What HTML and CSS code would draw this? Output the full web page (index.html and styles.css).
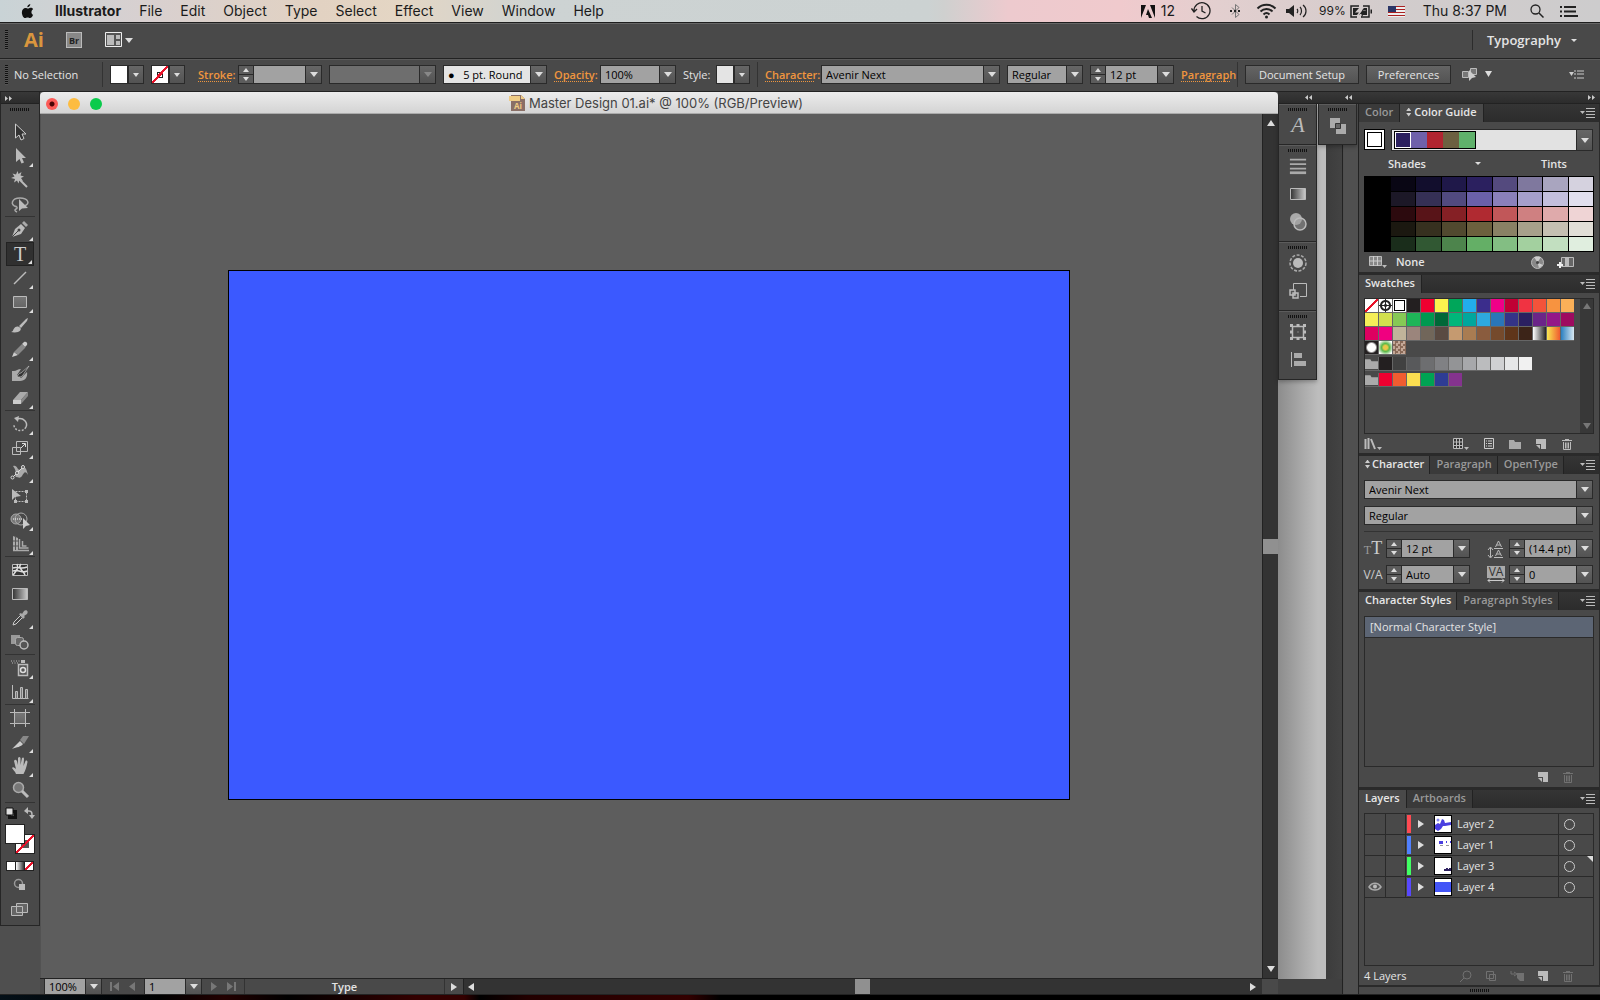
FILE: index.html
```html
<!DOCTYPE html>
<html lang="en">
<head>
    <meta charset="UTF-8">
    <meta name="viewport" content="width=device-width, initial-scale=1.0">
    <title>Master Design 01.ai</title>
    <link rel="stylesheet" href="styles.css">
</head>
<body>
    <svg class="defs" aria-hidden="true">
        <defs>
            <linearGradient id="fade"><stop offset="0" stop-color="#333"/><stop offset="1" stop-color="#ccc"/></linearGradient>
            <linearGradient id="metal" x2="0" y2="1"><stop offset="0" stop-color="#777"/><stop offset="1" stop-color="#666"/></linearGradient>
        </defs>
        <symbol id="select" viewBox="0 0 20 20"><path d="M5.500 2v14l3.500-3 2 5 3-1.500-2-4.500h4z" fill="#333" stroke="#ccc"/></symbol>
        <symbol id="direct" viewBox="0 0 20 20"><path d="M6 2v14l3.500-3 2 4.500 2.500-1-2-4.500h4z" fill="#bbb"/></symbol>
        <symbol id="wand" viewBox="0 0 20 20"><path d="M7.500 1l1 3 3-2-1 3.500 3.500 1-3 1.500 2 3-3.500-1-1 3.500-1.500-3-3 2 1-3.500-4-1 3.500-1.500-2-3 3.500 1z" fill="#bbb"/><path d="M9 9l8 8" stroke="#bbb" stroke-width="2"/></symbol>
        <symbol id="lasso" viewBox="0 0 20 20"><path d="M7 13C-1 11 2 4 10 4s11 6 4 8M4 12c3 0 4 2 2 3s-1 2 1 3" fill="none" stroke="#aaa" stroke-width="1.500"/><path d="M9 5v12l3-2.500 6-.5z" fill="#bbb"/></symbol>
        <symbol id="pen" viewBox="0 0 20 20"><path d="M2 17l3-8 6-5 4 4-4 6z" fill="#bbb"/><path d="M12 3l2-2 4 4-2 2z" fill="#aaa"/><path d="M2 17l7-7" stroke="#444"/><circle cx="9" cy="10" r="1.500" fill="#444"/></symbol>
        <symbol id="line" viewBox="0 0 20 20"><path d="M4 16L16 4" stroke="#bbb" stroke-width="1.500"/></symbol>
        <symbol id="rect" viewBox="0 0 20 20"><path d="M3.500 4.500h13v11h-13z" fill="url(#metal)" stroke="#bbb"/></symbol>
        <symbol id="brush" viewBox="0 0 20 20"><path d="M18 2l-1 3-6 7-2-2 7-7zM9 11c3 1 2 4-1 5-2 .7-5 .6-7 0 2-.500 2-2 3-3.500C5 11 7 10 9 11z" fill="#bbb"/></symbol>
        <symbol id="pencil" viewBox="0 0 20 20"><path d="M2 17l2-5 4 3zM12 4l2-2c2-1 4 1 3 3l-2 2z" fill="#ccc"/><path d="M4 12l8-8 3.500 3.500L8 15z" fill="#888"/></symbol>
        <symbol id="blob" viewBox="0 0 20 20"><path d="M2 7h2c2 0 4-2 7-2l-4 6 4 3 6-6c1 5-2 9-7 9H2z" fill="#aaa"/><path d="M19 2l-8 7c-2 0-3 2-4 4 3 0 5 0 6-2z" fill="#333" stroke="#bbb" stroke-width=".700"/></symbol>
        <symbol id="eraser" viewBox="0 0 20 20"><path d="M3 12l7-8h8l-7 8z" fill="#aaa"/><path d="M3 12h8v4H3z" fill="#ccc"/><path d="M11 12l7-8v4l-7 8z" fill="#888"/></symbol>
        <symbol id="rotate" viewBox="0 0 20 20"><path d="M7 5c7-2 11 4 9 8" fill="none" stroke="#bbb" stroke-width="1.500"/><path d="M16 13c-3 6-12 4-12-2" fill="none" stroke="#bbb" stroke-width="1.500" stroke-dasharray="2 1.500"/><path d="M4 4l5-2-1 6z" fill="#bbb"/></symbol>
        <symbol id="scale" viewBox="0 0 20 20"><path d="M2.500 9.500h8v7h-8zM6.500 3.500h11v10h-11z" fill="none" stroke="#bbb"/><path d="M11 10l4-4M12 5.500h3.500V9" stroke="#ddd" fill="none"/></symbol>
        <symbol id="warp" viewBox="0 0 20 20"><path d="M3 4c5-2 4 6 8 3s5-2 7 6c-3-5-4-2-6 1s-4 1-6 1c-2-1 2-5-3-11z" fill="#aaa"/><path d="M2 16L13 5" stroke="#ddd"/><circle cx="2.500" cy="15.500" r="1.500" fill="#444" stroke="#ddd"/><circle cx="7" cy="11" r="1.500" fill="#444" stroke="#ddd"/><circle cx="13" cy="5" r="1.500" fill="#444" stroke="#ddd"/></symbol>
        <symbol id="free" viewBox="0 0 20 20"><path d="M5.500 5.500h11v10h-11z" fill="none" stroke="#bbb" stroke-dasharray="2 1"/><path d="M15 4h3v3h-3zM15 14h3v3h-3zM4 14h3v3H4zM2 3v11l3-3 6-1z" fill="#bbb"/></symbol>
        <symbol id="builder" viewBox="0 0 20 20"><circle cx="6" cy="9" r="5" fill="#777" stroke="#aaa"/><circle cx="11" cy="9" r="6" fill="none" stroke="#aaa"/><path d="M3 9h10" stroke="#fff" stroke-dasharray="1 1"/><path d="M13 8v11l3-3 4-1z" fill="#ccc"/></symbol>
        <symbol id="persp" viewBox="0 0 20 20"><path d="M3 2l5 2v13H3z" fill="#aaa"/><path d="M9.500 5v9h9M12.500 7v5h4M3 16.500h16" stroke="#aaa" stroke-width="1.500" fill="none"/><path d="M3 7h6M3 12h6M5.500 2v14" stroke="#555"/></symbol>
        <symbol id="mesh" viewBox="0 0 20 20"><path d="M2.500 4.500h15v11h-15z" fill="#333" stroke="#bbb"/><path d="M7 4c2 5-1 7-4 11M11 4c-4 4 3 7 4 11M3 8c4-2 8 2 14-1M3 11c6-2 9 3 14 0" fill="none" stroke="#ddd" stroke-width="1.500"/></symbol>
        <symbol id="grad" viewBox="0 0 20 20"><path d="M2.500 4.500h15v11h-15z" fill="url(#fade)" stroke="#bbb"/></symbol>
        <symbol id="dropper" viewBox="0 0 20 20"><path d="M3 17l1-3 7-7 2 2-7 7z" fill="#444" stroke="#ccc"/><path d="M9 6l2-1 1 1 2-3c2-2 5 0 3 3l-3 2 1 1-2 2z" fill="#aaa"/></symbol>
        <symbol id="blend" viewBox="0 0 20 20"><path d="M1 3h9v9H1z" fill="#999"/><rect x="5.500" y="5.500" width="8" height="8" rx="2" fill="#666" stroke="#aaa"/><circle cx="14" cy="13" r="4" fill="#555" stroke="#bbb" stroke-width="1.500"/></symbol>
        <symbol id="spray" viewBox="0 0 20 20"><path d="M1 3h9M2 5h7" stroke="#bbb" stroke-dasharray="1 1.500"/><path d="M11 2h4v3h-4z" fill="#bbb"/><path d="M8.500 6.500h9v11h-9z" fill="#555" stroke="#bbb" stroke-width="1.500"/><circle cx="13" cy="12" r="2.500" fill="none" stroke="#ddd" stroke-width="1.500"/></symbol>
        <symbol id="graph" viewBox="0 0 20 20"><path d="M2.500 3v13.500h16" fill="none" stroke="#bbb"/><path d="M5.500 9.500h2v7h-2zM10.500 5.500h2v11h-2zM15.500 7.500h2v9h-2z" fill="#777" stroke="#bbb"/></symbol>
        <symbol id="artboard" viewBox="0 0 20 20"><path d="M4.500 1v18M15.500 1v18M0 4.500h20M0 15.500h20" stroke="#bbb"/><path d="M4.500 4.500h11v11h-11z" fill="url(#metal)" stroke="#bbb"/></symbol>
        <symbol id="slice" viewBox="0 0 20 20"><path d="M2 17l8-8 3 3c-2 3-6 3-11 5z" fill="#ccc"/><path d="M10 8l3-4h6l-5 8z" fill="#888"/></symbol>
        <symbol id="hand" viewBox="0 0 20 20"><path d="M6 18c-1-3-3-4-4-6 1-2 3 0 4 1L4 5c1-2 2-1 3 0l1 4V2c1-1.500 2-1 2.500 0v7l1.500-7c1-1 2-.5 2 1l-.5 7 2-5c1-1 2 0 2 1-1 5-2 8-4 12z" fill="#bbb"/></symbol>
        <symbol id="zoom" viewBox="0 0 20 20"><circle cx="8.500" cy="7.500" r="5" fill="#777" stroke="#aaa" stroke-width="1.500"/><path d="M12 11l6 6" stroke="#bbb" stroke-width="3"/></symbol>
        <symbol id="modes" viewBox="0 0 20 20"><circle cx="8.500" cy="8.500" r="4" fill="none" stroke="#999" stroke-width="1.500"/><path d="M9 9h6v6H9z" fill="#bbb"/></symbol>
        <symbol id="screens" viewBox="0 0 20 20"><path d="M1.500 7.500h11v9h-11zM6.500 4.500h11v9h-11z" fill="#666" stroke="#bbb"/></symbol>
        <symbol id="lines" viewBox="0 0 20 20"><path d="M1 3h18M1 8h18M1 13h18" stroke="#aaa" stroke-width="2"/><path d="M1 17.500h18" stroke="#aaa" stroke-width="3"/></symbol>
        <symbol id="transp" viewBox="0 0 20 20"><circle cx="8" cy="7" r="6" fill="#aaa"/><circle cx="12" cy="12" r="6" fill="#999" fill-opacity=".500" stroke="#bbb" stroke-width="1.500"/></symbol>
        <symbol id="appear" viewBox="0 0 20 20"><circle cx="10" cy="10" r="5" fill="#bbb"/><circle cx="10" cy="10" r="8" fill="none" stroke="#aaa" stroke-width="1.500" stroke-dasharray="3 1.500"/></symbol>
        <symbol id="gstyle" viewBox="0 0 20 20"><path d="M5.500 10V2.500h13v13H12" fill="none" stroke="#bbb"/><path d="M2 9h5v5H2zM5 12h5v5H5z" fill="#555" stroke="#bbb" stroke-width="1.500"/></symbol>
        <symbol id="trans" viewBox="0 0 20 20"><path d="M4.500 4.500h11v11h-11z" fill="none" stroke="#bbb" stroke-width="1.500"/><path d="M2 2h3v3H2zM8.500 2h3v3h-3zM15 2h3v3h-3zM2 8.500h3v3H2zM15 8.500h3v3h-3zM2 15h3v3H2zM8.500 15h3v3h-3zM15 15h3v3h-3zM9.500 9.500h1v1h-1z" fill="#bbb"/></symbol>
        <symbol id="align" viewBox="0 0 20 20"><path d="M3.500 2v15" stroke="#bbb"/><path d="M6 3h8v5H6zM6 11h12v5H6z" fill="#aaa"/></symbol>
        <symbol id="pathf" viewBox="0 0 20 20"><path d="M2 3h10v10H2zM8 9h10v10H8z" fill="#aaa"/><path d="M7.500 8.500h5v5h-5z" fill="#666" stroke="#333"/></symbol>
        <symbol id="menu" viewBox="0 0 16 10"><path d="M0 3h5L2.500 6z" fill="#bbb"/><path d="M6 .500h9M6 3.500h9M6 6.500h9M6 9.500h9" stroke="#bbb"/></symbol>
        <symbol id="new" viewBox="0 0 12 12"><path d="M1 1h10v10H6V6H1z" fill="#bbb"/><path d="M1 7h4v4z" fill="#bbb"/></symbol>
        <symbol id="trash" viewBox="0 0 12 12"><path d="M1 2.500h10M4 1.500h4M2.500 4v7.500h7V4M4.500 4.500v6M6 4.500v6M7.500 4.500v6" fill="none" stroke="#bbb"/></symbol>
        <symbol id="folder" viewBox="0 0 12 12"><path d="M0 2h5l1 2h6v7H0z" fill="#aaa"/></symbol>
        <symbol id="gridv" viewBox="0 0 18 12"><path d="M.500.500h12v9H.500z" fill="#888" stroke="#bbb"/><path d="M4.500 0v10M8.500 0v10M0 5h13" stroke="#ccc"/><path d="M13 9h5l-2.500 3z" fill="#bbb"/></symbol>
    </svg>

    <header class="menubar">
        <svg class="apple" viewBox="0 0 16 18"><path d="M11 1c0 2-1.500 3.500-3.200 3.500C7.600 3 9 1.300 11 1zM14 12.500C13 15 12 16 10.700 16c-1 0-1.400-.6-2.600-.6s-1.700.6-2.600.6C3.500 16 2 12.500 2 10c0-3 2-4.800 3.800-4.800 1.200 0 1.900.7 2.700.7.700 0 1.600-.8 3-.8 1 0 2 .5 2.500 1.400-2.500 1.500-2.300 5 0 6z" fill="#111"/></svg>
        <nav class="menus">
            <a href="#" class="app-name">Illustrator</a>
            <a href="#">File</a>
            <a href="#">Edit</a>
            <a href="#">Object</a>
            <a href="#">Type</a>
            <a href="#">Select</a>
            <a href="#">Effect</a>
            <a href="#">View</a>
            <a href="#">Window</a>
            <a href="#">Help</a>
        </nav>
        <div class="status-items">
            <svg width="14" height="13" viewBox="0 0 14 13"><path d="M0 0h5L0 13zM9 0h5v13zM7 4l4 9H8L7 10H5z" fill="#111"/></svg>
            <span class="count">12</span>
            <svg class="s-clock" width="20" height="18" viewBox="0 0 20 18"><path d="M3 9a8 8 0 1 1 2.500 5.500M.500 6.500L3 10l3-3M11 4v5l3.500 2" fill="none" stroke="#222" stroke-width="1.300"/></svg>
            <svg class="s-bt" width="12" height="16" viewBox="0 0 12 16"><path d="M2 4.500l7 7-3.500 3v-13L9 4.500l-7 7" fill="none" stroke="#777"/><path d="M0 8h12" stroke="#222" stroke-width="2" stroke-dasharray="2 2"/></svg>
            <svg class="s-wifi" width="21" height="16" viewBox="0 0 21 16"><path d="M1.500 5.500c5-5 13-5 18 0M4.500 8.500c3.500-3.500 8.500-3.500 12 0M7.500 11.500c2-2 4-2 6 0" fill="none" stroke="#222" stroke-width="2"/><circle cx="10.500" cy="14" r="1.500" fill="#222"/></svg>
            <svg class="s-vol" width="22" height="14" viewBox="0 0 22 14"><path d="M0 5h3l5-4v12L3 9H0z" fill="#222"/><path d="M11 5c1 1 1 3 0 4M14 3c2 2 2 6 0 8M17 1c4 3 4 9 0 12" fill="none" stroke="#222" stroke-width="1.200"/></svg>
            <span class="charge">99%</span>
            <svg width="23" height="13" viewBox="0 0 23 13"><path d="M9 1H1v11h6M13 1h6v11h-8" fill="none" stroke="#222" stroke-width="1.500"/><path d="M3 3h6l-4 4.500h4L7 10H3zM17 10h-6l5-4.500h-4L14 3h3z" fill="#222"/><path d="M9 10l5-7-1 3h3l-5 7 1-4H9z" fill="#222"/><path d="M20.500 4.500h1.500v4h-1.500z" fill="#222"/></svg>
            <svg class="s-flag" width="17" height="11" viewBox="0 0 17 11"><path d="M0 0h17v11H0z" fill="#eee"/><path d="M0 .500h17M0 3.500h17M0 6.500h17M0 9.500h17" stroke="#a22"/><path d="M0 0h8v6H0z" fill="#2a3566"/></svg>
            <span class="time">Thu 8:37 PM</span>
            <svg class="s-find" width="14" height="14" viewBox="0 0 14 14"><circle cx="5.500" cy="5.500" r="4.500" fill="none" stroke="#222" stroke-width="1.300"/><path d="M9 9l4.500 4.500" stroke="#222" stroke-width="1.500"/></svg>
            <svg class="s-list" width="18" height="11" viewBox="0 0 18 11"><path d="M0 1h2M0 5.500h2M0 10h2M4 1h12M4 5.500h12M4 10h14" stroke="#222" stroke-width="2"/></svg>
        </div>
    </header>

    <div class="appbar">
        <i class="grip-v"></i>
        <span class="logo">Ai</span>
        <button class="bridge">Br</button>
        <button class="arrange" aria-label="Arrange documents"><svg width="28" height="16" viewBox="0 0 28 16"><path d="M.500.500h16v14H.500z" fill="#555" stroke="#eee"/><path d="M2 3h7v10H2zM11 3h4v4h-4zM11 9h4v4h-4z" fill="#bbb"/><path d="M20 6h8l-4 5z" fill="#ddd"/></svg></button>
        <button class="workspace">Typography<i class="tri small"></i></button>
    </div>

    <div class="control">
        <i class="grip-v"></i>
        <span class="state">No Selection</span>
        <i class="rule"></i>
        <button class="chip" aria-label="Fill"><i class="paint"></i><i class="drop"></i></button>
        <button class="chip" aria-label="Stroke"><i class="paint none"></i><i class="drop"></i></button>
        <a href="#" class="l-stroke">Stroke:</a>
        <span class="combo num"><i class="step"></i><input type="text" aria-label="Stroke weight"><i class="drop"></i></span>
        <span class="combo profile"><select aria-label="Width profile" disabled><option></option></select><i class="drop"></i></span>
        <span class="combo brushes"><select aria-label="Brush"><option>●&nbsp;&nbsp; 5 pt. Round</option></select><i class="drop"></i></span>
        <a href="#" class="l-opacity">Opacity:</a>
        <span class="combo w76"><input type="text" value="100%" aria-label="Opacity"><i class="drop"></i></span>
        <span class="l-style">Style:</span>
        <button class="chip" aria-label="Style"><i class="paint pale"></i><i class="drop"></i></button>
        <i class="rule"></i>
        <a href="#" class="l-char">Character:</a>
        <span class="combo font"><select aria-label="Font"><option>Avenir Next</option></select><i class="drop"></i></span>
        <span class="combo w76"><select aria-label="Font style"><option>Regular</option></select><i class="drop"></i></span>
        <span class="combo num"><i class="step"></i><input type="text" value="12 pt" aria-label="Font size"><i class="drop"></i></span>
        <a href="#" class="l-char">Paragraph</a>
        <i class="rule"></i>
        <button class="btn setup">Document Setup</button>
        <button class="btn prefs">Preferences</button>
        <button class="similar" aria-label="Select similar"><svg width="32" height="15" viewBox="0 0 32 15"><path d="M1.500 4.500h6v6h-6zM9.500 1.500h6v6h-6z" fill="#777" stroke="#bbb"/><path d="M8 3v11l3-3 4-1z" fill="#ccc"/><path d="M24 4h7l-3.500 6z" fill="#ddd"/></svg></button>
        <button class="bar-menu" aria-label="Panel menu"><svg width="15" height="9" viewBox="0 0 15 9"><path d="M0 2h5L2.500 6z" fill="#ccc"/><path d="M5 1h2M8 1h7M5 4h2M8 4h7M5 8h2M8 8h7" stroke="#ccc"/></svg></button>
    </div>

    <main class="work">
        <aside class="tools">
            <div class="strip"><svg width="7" height="5" viewBox="0 0 7 5"><path d="M0 0l3 2.500L0 5zM4 0l3 2.500L4 5z" fill="#ccc"/></svg></div>
            <i class="grip"></i>
            <div id="toolbox"></div>
            <div class="fill-top">
                <svg width="12" height="12" viewBox="0 0 12 12"><path d="M4.500 4.500h6v6h-6z" fill="none" stroke="#111" stroke-width="3"/><path d="M1 1h7v7H1z" fill="#ddd" stroke="#111"/></svg>
                <svg width="11" height="12" viewBox="0 0 11 12"><path d="M2 4h3c3 0 3 2 3 5" fill="none" stroke="#bbb" stroke-width="1.500"/><path d="M0 4l4-4v7zM5 8h6l-3 4z" fill="#bbb"/></svg>
            </div>
            <div class="fill-stroke"><i class="f-stroke"></i><i class="f-fill"></i></div>
            <div class="fill-kind"><i></i><i class="g"></i><i class="n"></i></div>
            <button class="tool" aria-label="Drawing mode"><svg><use href="#modes"/></svg></button>
            <button class="tool" aria-label="Screen mode"><svg><use href="#screens"/></svg></button>
        </aside>

        <section class="document">
            <div class="titlebar">
                <div class="lights"><i class="close"></i><i class="mini"></i><i class="full"></i></div>
                <svg width="16" height="16" viewBox="0 0 16 16"><path d="M2 0h10l4 4v12H2z" fill="#8a6f66"/><path d="M0 1h11v5H0z" fill="#efcc85"/><path d="M12 0l4 4h-4z" fill="#efcc85"/><text x="5" y="14" class="doc-ai">Ai</text></svg>
                <h1>Master Design 01.ai* @ 100% (RGB/Preview)</h1>
            </div>
            <div class="view">
                <div class="canvas"><div class="artboard"></div></div>
                <div class="vscroll"><i class="up"></i><i class="thumb"></i><i class="down"></i></div>
            </div>
            <div class="statusbar">
                <span class="combo zoomf"><input type="text" value="100%" aria-label="Zoom"><i class="drop"></i></span>
                <svg class="pager" width="26" height="9" viewBox="0 0 26 9"><path d="M0 0h2v9H0zM9 0v9L3 4.500zM25 0v9l-6-4.500z" fill="#777"/></svg>
                <span class="combo zoomf"><input type="text" value="1" aria-label="Artboard"><i class="drop"></i></span>
                <svg class="pager" width="26" height="9" viewBox="0 0 26 9"><path d="M1 0v9l6-4.500zM17 0v9l6-4.500zM24 0h2v9h-2z" fill="#777"/></svg>
                <span class="mode">Type</span>
                <button class="mode-next" aria-label="Status menu"><i class="right"></i></button>
                <div class="hscroll"><i class="left"></i><i class="thumb"></i><i class="right"></i></div>
                <i class="corner"></i>
            </div>
        </section>

        <section class="docks">
            <div class="strip">
                <svg class="c1" width="7" height="5" viewBox="0 0 7 5"><path d="M3 0L0 2.500 3 5zM7 0L4 2.500 7 5z" fill="#ccc"/></svg>
                <svg class="c2" width="7" height="5" viewBox="0 0 7 5"><path d="M3 0L0 2.500 3 5zM7 0L4 2.500 7 5z" fill="#ccc"/></svg>
                <svg class="c3" width="7" height="5" viewBox="0 0 7 5"><path d="M0 0l3 2.500L0 5zM4 0l3 2.500L4 5z" fill="#ccc"/></svg>
            </div>
            <div class="dock-row">
                <div class="icon-docks">
                    <div class="dock">
                        <div class="set"><i class="grip"></i><button class="glyph" aria-label="Character styles">A</button></div>
                        <div class="set"><i class="grip"></i>
                            <button aria-label="Stroke"><svg class="flat"><use href="#lines"/></svg></button>
                            <button aria-label="Gradient"><svg><use href="#grad"/></svg></button>
                            <button aria-label="Transparency"><svg><use href="#transp"/></svg></button>
                        </div>
                        <div class="set"><i class="grip"></i>
                            <button aria-label="Appearance"><svg><use href="#appear"/></svg></button>
                            <button aria-label="Graphic styles"><svg><use href="#gstyle"/></svg></button>
                        </div>
                        <div class="set"><i class="grip"></i>
                            <button aria-label="Transform"><svg><use href="#trans"/></svg></button>
                            <button aria-label="Align"><svg><use href="#align"/></svg></button>
                        </div>
                    </div>
                    <div class="dock">
                        <div class="set"><i class="grip"></i><button aria-label="Pathfinder"><svg><use href="#pathf"/></svg></button></div>
                    </div>
                </div>

                <div class="panels">
                    <div class="panel">
                        <div class="tabs"><button>Color</button><button class="on"><i class="updown"></i>Color Guide</button><svg><use href="#menu"/></svg></div>
                        <div class="guide-top">
                            <i class="base"></i>
                            <div class="harmony"><div id="harmony"></div><i class="drop"></i></div>
                        </div>
                        <div class="guide-names"><span>Shades</span><i class="tri small"></i><span>Tints</span></div>
                        <div class="guide" id="guide"></div>
                        <div class="foot guide-foot">
                            <svg width="18" height="12"><use href="#gridv"/></svg><span class="none-label">None</span>
                            <svg class="push" width="13" height="13" viewBox="0 0 13 13"><circle cx="6.500" cy="6.500" r="6" fill="#888" stroke="#bbb"/><path d="M6.500 6.500L3 1h7zM6.500 6.500L12 9l-4 3z" fill="#ccc"/><circle cx="6.500" cy="6.500" r="1.500" fill="#444"/></svg>
                            <svg width="17" height="13" viewBox="0 0 17 13"><path d="M4.500 1.500h12v9h-12z" fill="#666" stroke="#bbb"/><path d="M8 2h4v8H8z" fill="#bbb"/><path d="M0 9h6M3 6v6" stroke="#eee" stroke-width="2"/></svg>
                            <i class="resize"></i>
                        </div>
                    </div>

                    <div class="panel">
                        <div class="tabs"><button class="on">Swatches</button><svg><use href="#menu"/></svg></div>
                        <div class="swatch-box">
                            <div id="swatches"></div>
                            <div class="mini-scroll"><i class="up"></i><i class="down"></i></div>
                        </div>
                        <div class="foot swatch-foot">
                            <svg width="18" height="12" viewBox="0 0 18 12"><path d="M1.500 1v10M4.500 0v11M7 1l4 10" stroke="#bbb" stroke-width="2"/><path d="M13 9h5l-2.500 3z" fill="#bbb"/></svg>
                            <svg class="push" width="16" height="12" viewBox="0 0 16 12"><path d="M.500.500h9v10h-9z" fill="#333" stroke="#bbb"/><path d="M3.500 0v11M6.500 0v11M0 4h10M0 7.500h10" stroke="#bbb"/><path d="M11 9h5l-2.500 3z" fill="#bbb"/></svg>
                            <svg width="12" height="12" viewBox="0 0 12 12"><path d="M1.500.500h9v10h-9z" fill="none" stroke="#ccc"/><path d="M3 3h1M5 3h4M3 5.500h1M5 5.500h4M3 8h1M5 8h4" stroke="#ccc"/></svg>
                            <svg width="12" height="12"><use href="#folder"/></svg>
                            <svg width="12" height="12"><use href="#new"/></svg>
                            <svg width="12" height="12"><use href="#trash"/></svg>
                            <i class="resize"></i>
                        </div>
                    </div>

                    <div class="panel">
                        <div class="tabs tight"><button class="on"><i class="updown"></i>Character</button><button>Paragraph</button><button>OpenType</button><svg><use href="#menu"/></svg></div>
                        <div class="char">
                            <span class="combo wide"><select aria-label="Font family"><option>Avenir Next</option></select><i class="drop"></i></span>
                            <span class="combo wide"><select aria-label="Style"><option>Regular</option></select><i class="drop"></i></span>
                            <hr>
                            <label class="serif" for="size"><small>T</small>T</label>
                            <span class="combo num"><i class="step"></i><input type="text" id="size" value="12 pt"><i class="drop"></i></span>
                            <label for="leading"><svg width="18" height="18" viewBox="0 0 18 18"><path d="M3.500 8v9M1 10l2.500-3L6 10M1 15l2.500 3L6 15M7 8.500h9M7 17.500h9M8.500 7l3-6 3 6M9.500 5h4M8.500 16l3-6 3 6M9.500 14h4" fill="none" stroke="#bbb"/></svg></label>
                            <span class="combo num"><i class="step"></i><input type="text" id="leading" value="(14.4 pt)"><i class="drop"></i></span>
                            <label class="kern" for="kern">V/A</label>
                            <span class="combo num"><i class="step"></i><input type="text" id="kern" value="Auto"><i class="drop"></i></span>
                            <label class="track" for="track"><span>VA</span><svg width="18" height="5" viewBox="0 0 18 5"><path d="M1 2.500h16M3 .500L1 2.500l2 2M15 .500l2 2-2 2" fill="none" stroke="#ccc"/></svg></label>
                            <span class="combo num"><i class="step"></i><input type="text" id="track" value="0"><i class="drop"></i></span>
                        </div>
                    </div>

                    <div class="panel grow">
                        <div class="tabs tight"><button class="on">Character Styles</button><button>Paragraph Styles</button><svg><use href="#menu"/></svg></div>
                        <ul class="styles"><li>[Normal Character Style]</li></ul>
                        <div class="foot">
                            <svg class="push" width="12" height="12"><use href="#new"/></svg>
                            <svg class="dim" width="12" height="12"><use href="#trash"/></svg>
                            <i class="resize"></i>
                        </div>
                    </div>

                    <div class="panel">
                        <div class="tabs"><button class="on">Layers</button><button>Artboards</button><svg><use href="#menu"/></svg></div>
                        <ul class="layers">
                            <li><i class="eye"></i><i class="lock"></i><i class="tag red"></i><i class="right"></i><svg class="thumbnail" viewBox="0 0 16 16"><path d="M0 0h16v16H0z" fill="#fff"/><path d="M0 9l3-2 2 1 2-5 2 1 1 3 6-1v3l-6 1-2 0-2 3-3 2-3-2z" fill="#4a3fe0"/><circle cx="3" cy="4" r="1.500" fill="#8c8cf0"/></svg><span>Layer 2</span><i class="target"></i></li>
                            <li><i class="eye"></i><i class="lock"></i><i class="tag blue"></i><i class="right"></i><svg class="thumbnail" viewBox="0 0 16 16"><path d="M0 0h16v16H0z" fill="#fff"/><path d="M4 4h4v3H4zM11 4h1v2h-1zM15 4h1v2h-1z" fill="#4a3fe0"/><path d="M5 8.500h3M11 8.500h3" stroke="#999"/></svg><span>Layer 1</span><i class="target"></i></li>
                            <li><i class="eye"></i><i class="lock"></i><i class="tag green"></i><i class="right"></i><svg class="thumbnail" viewBox="0 0 16 16"><path d="M0 0h16v16H0z" fill="#fff"/><path d="M9 13v-2h2v-1h2v1h1v-1h2v3z" fill="#2e2160"/></svg><span>Layer 3</span><i class="target"></i></li>
                            <li><svg class="eye" viewBox="0 0 14 10"><path d="M1 5c3-5 9-5 12 0-3 4-9 4-12 0z" fill="#555" stroke="#aaa" stroke-width="1.500"/><circle cx="7" cy="4.500" r="2" fill="#bbb"/></svg><i class="lock"></i><i class="tag violet"></i><i class="right"></i><svg class="thumbnail" viewBox="0 0 16 16"><path d="M0 0h16v16H0z" fill="#fff"/><path d="M0 3h16v10H0z" fill="#4355f7"/></svg><span>Layer 4</span><i class="target"></i></li>
                        </ul>
                        <div class="foot layer-foot">
                            <span>4 Layers</span>
                            <svg class="push dim" width="12" height="12" viewBox="0 0 12 12"><circle cx="7" cy="5" r="4" fill="none" stroke="#bbb"/><path d="M4 8l-4 4" stroke="#bbb"/></svg>
                            <svg class="dim" width="12" height="12" viewBox="0 0 12 12"><path d="M1.500 1.500h7v7h-7zM4.500 4.500h6v6h-6z" fill="none" stroke="#bbb"/></svg>
                            <svg class="dim" width="14" height="12" viewBox="0 0 14 12"><path d="M1 1v3h4M4 2l3 2-3 2" fill="none" stroke="#bbb"/><path d="M7 3h7v8h-4l-3-3z" fill="#bbb"/></svg>
                            <svg width="12" height="12"><use href="#new"/></svg>
                            <svg class="dim" width="12" height="12"><use href="#trash"/></svg>
                            <i class="resize"></i>
                        </div>
                    </div>
                    <div class="tail"><i class="grip"></i></div>
                </div>
            </div>
        </section>
    </main>
    <footer class="desk"></footer>

    <script>
const tools = [
  ['select', 'direct+', 'wand', 'lasso'],
  ['pen+', 'T+', 'line+', 'rect+', 'brush', 'pencil+', 'blob', 'eraser+'],
  ['rotate+', 'scale+', 'warp+', 'free', 'builder+', 'persp+'],
  ['mesh', 'grad', 'dropper+', 'blend'],
  ['spray+', 'graph+'],
  ['artboard', 'slice+', 'hand+', 'zoom']
];

document.getElementById('toolbox').innerHTML = tools.map(group => {
  const buttons = group.map(item => {
    const name = item.replace('+', '');
    const more = item.endsWith('+') ? '<i class="more"></i>' : '';
    if (name === 'T') {
      return `<button class="tool active" aria-label="Type"><b>T</b>${more}</button>`;
    }
    return `<button class="tool" aria-label="${name}"><svg><use href="#${name}"/></svg>${more}</button>`;
  });
  return `<div class="tool-group">${buttons.join('')}</div>`;
}).join('');

const cells = (colors) => colors.split(' ').map(c => `<i style="background-color:${c}"></i>`).join('');

document.getElementById('harmony').innerHTML = cells('#2c215f #6f61aa #b02430 #6c6040 #60b16b');

const guide = [
  '#000 #090614 #120e2d #1f1849 #2b205f #544a7e #7f789e #a9a5bf #d5d2df',
  '#000 #1c1827 #353055 #514a7f #6a60a9 #8a80ba #a59fcb #c3bfdd #e1dfee',
  '#000 #2c0a0e #581418 #852025 #b02a31 #c15759 #cf8081 #dfaaab #efd4d5',
  '#000 #1b1810 #36301f #51492f #6c603e #898165 #a7a08b #c5bfb2 #e1ded7',
  '#000 #1a2d1b #315833 #4d844c #64af66 #83be83 #a3d09f #c2dfc0 #e0eedf'
];
document.getElementById('guide').innerHTML = guide.map(cells).join('');

const swatches = [
  '#fff #fff #fff #231f20 #f00030 #fbf34e #00a65a #22adec #3b2d8c #f00088 #c00034 #f03342 #f3533a #f79340 #fab058',
  '#f5ee58 #d2e04e #86c955 #1eb558 #009950 #006838 #00b67a #00a79d #2da9df #2a76b8 #343488 #2b2060 #6b2588 #941788 #9e0b60',
  '#de0060 #f00080 #c1b49a #9b857c #71665a #5a4a42 #c59a70 #a97c52 #8a5c3e #754a2c #5f351a #3c2418 #555 #555 #555',
  '#231f20 #fff #a78a7a'
];
const groups = [
  '#231f20 #414141 #58595b #6d6e70 #808184 #939496 #a7a8ab #bbbcbe #d0d1d3 #e6e7e8 #f1f1f1',
  '#ef0030 #f15c30 #fbde50 #00a353 #2e3c94 #84338e'
];
document.getElementById('swatches').innerHTML =
  swatches.map(row => `<div class="sw-row">${cells(row)}</div>`).join('') +
  groups.map(row => `<div class="sw-row sw-group"><svg width="13" height="13"><use href="#folder"/></svg>${cells(row)}</div>`).join('');
    </script>
</body>
</html>
```
FILE: styles.css
```css
* {
  box-sizing: border-box;
}

body {
  margin: 0;
  height: 100vh;
  display: flex;
  flex-direction: column;
  overflow: hidden;
  background: #494949;
  color: #e4e4e4;
  font: 11px/16px "Open Sans", sans-serif;
}

button, input, select {
  font: inherit;
  color: inherit;
  margin: 0;
  padding: 0;
  border: 0;
  background: none;
  border-radius: 0;
  appearance: none;
  min-width: 0;
}

a {
  color: inherit;
  text-decoration: none;
}

ul {
  list-style: none;
  margin: 0;
  padding: 0;
}

svg {
  display: block;
  flex: none;
}

.defs {
  position: absolute;
  width: 0;
  height: 0;
}

/* menu bar */
.menubar {
  flex: none;
  height: 22px;
  display: flex;
  align-items: center;
  color: #1b1b1b;
  background: linear-gradient(90deg, #c9d3d6 0, #d8d0d0 9%, #e2d2c2 20%, #e4d6c4 25%, #cdd3d3 34%, #ccd2d2 58%, #cfd0cf 59%, #edcace 63%, #f0cacd 70%, #e3cfcf 76%, #d2cccc 87%, #cdcccd 100%);
  font: 14px/22px Inter, sans-serif;
}

.apple {
  width: 15px;
  height: 17px;
  margin: 0 20px;
}

.menus {
  display: flex;
  gap: 18px;
}

.app-name {
  font-weight: 700;
}

.status-items {
  display: flex;
  align-items: center;
  margin-left: auto;
  padding-right: 22px;
}

.count { margin-left: 6px; }
.s-clock { margin-left: 16px; }
.s-bt { margin-left: 19px; }
.s-wifi { margin-left: 14px; }
.s-vol { margin-left: 9px; }
.charge { margin: 0 4px 0 11px; font-size: 12px; }
.s-flag { margin-left: 15px; }
.time { margin-left: 18px; }
.s-find { margin-left: 23px; }
.s-list { margin-left: 16px; }

/* application bar */
.appbar {
  flex: none;
  height: 37px;
  display: flex;
  align-items: center;
  padding: 0 23px 1px 5px;
  border-top: 1px solid #1e1e1e;
  border-bottom: 1px solid #222;
  box-shadow: inset 0 1px #666;
}

.grip-v {
  width: 3px;
  height: 20px;
  background: repeating-linear-gradient(#111 0 1px, #555 1px 2px);
}

.logo {
  margin-left: 16px;
  width: 42px;
  font: bold 20px/24px "Open Sans", sans-serif;
  color: #d9963e;
}

.bridge {
  width: 16px;
  height: 16px;
  background: #888;
  border: 1px solid #bbb;
  color: #222;
  font: bold 9px/13px "Open Sans", sans-serif;
}

.arrange {
  margin-left: 23px;
}

.workspace {
  display: flex;
  align-items: center;
  gap: 10px;
  height: 20px;
  margin-left: auto;
  padding-left: 14px;
  border-left: 1px solid #2c2c2c;
  font-size: 13px;
  font-weight: 600;
}

.tri {
  border: 4px solid transparent;
  border-top: 5px solid #ddd;
  border-bottom: 0;
}

.tri.small {
  border-width: 3px 3px 0;
}

/* control bar */
.control {
  flex: none;
  height: 33px;
  display: flex;
  align-items: center;
  gap: 7px;
  padding: 0 16px 1px 5px;
  border-bottom: 1px solid #222;
  box-shadow: inset 0 1px #5a5a5a;
}

.control .grip-v {
  margin-right: -1px;
}

.control a {
  color: #f0963e;
  font-weight: 600;
  line-height: 13px;
  border-bottom: 1px dotted #f0963e;
  white-space: nowrap;
}

.state { width: 81px; white-space: nowrap; }
.l-stroke { width: 33px; margin-left: 6px; }
.l-opacity { width: 39px; }
.l-style { width: 26px; white-space: nowrap; }
.l-char { width: 49px; }

.rule {
  width: 1px;
  height: 25px;
  background: #333;
}

.chip {
  display: flex;
  width: 34px;
  height: 19px;
  border: 1px solid #2a2a2a;
}

.paint {
  flex: 1;
  background: #fff;
  border-right: 1px solid #2a2a2a;
}

.paint.none {
  background:
    linear-gradient(to top left, transparent 45%, #e8132a 45% 55%, transparent 55%),
    linear-gradient(#fff, #fff) center / 4px 4px no-repeat,
    linear-gradient(#222, #222) center / 6px 6px no-repeat,
    #fff;
}

.paint.pale {
  background: #e4e4e4;
}

.combo {
  display: flex;
  height: 19px;
  border: 1px solid #2a2a2a;
  background: #a2a2a2;
  color: #000;
}

.combo input, .combo select {
  flex: 1;
  width: 0;
  padding-left: 4px;
  line-height: 17px;
}

.drop {
  flex: none;
  width: 16px;
  display: flex;
  align-items: center;
  justify-content: center;
  background: linear-gradient(#666, #535353);
  border-left: 1px solid #2a2a2a;
}

.drop::before {
  content: "";
  border: 4px solid transparent;
  border-top: 5px solid #ddd;
  border-bottom: 0;
}

.chip .drop {
  width: 15px;
}

.chip .drop::before {
  border-width: 4px 3px 0;
}

.step {
  flex: none;
  width: 15px;
  display: flex;
  flex-direction: column;
  align-items: center;
  justify-content: space-around;
  background: linear-gradient(#5c5c5c 47%, #2a2a2a 47% 53%, #5c5c5c 53%);
  border-right: 1px solid #2a2a2a;
}

.step::before, .step::after {
  content: "";
  border: 3px solid transparent;
}

.step::before {
  border-bottom: 4px solid #ddd;
  border-top: 0;
}

.step::after {
  border-top: 4px solid #ddd;
  border-bottom: 0;
}

.num { width: 84px; }
.w76 { width: 76px; }
.profile { width: 107px; background: #6e6e6e; }
.brushes { width: 104px; background: #e4e4e4; }
.font { width: 179px; }

.profile .drop::before {
  border-top-color: #888;
}

.btn {
  height: 19px;
  border: 1px solid #2a2a2a;
  background: linear-gradient(#646464, #535353);
  white-space: nowrap;
}

.setup { width: 114px; }
.prefs { width: 85px; }
.similar { margin-left: 3px; }
.bar-menu { margin-left: auto; }

/* work area */
.work {
  flex: 1;
  min-height: 0;
  display: flex;
  background: #4f4f4f;
  border-bottom: 1px solid #222;
}

.desk {
  flex: none;
  height: 5px;
  background: linear-gradient(90deg, #041018 0, #000 10%, #200 14%, #000 18%, #300 26%, #300 29%, #000 30%, #200 33%, #300 43%, #000 45%);
}

.strip {
  flex: none;
  height: 12px;
  background: linear-gradient(#383838, #2c2c2c);
  border-bottom: 1px solid #222;
}

.grip {
  display: block;
  width: 20px;
  height: 3px;
  margin: 0 auto;
  background: repeating-linear-gradient(90deg, #111 0 1px, #494949 1px 2px);
}

.tools {
  flex: none;
  align-self: flex-start;
  width: 40px;
  height: 834px;
  background: #494949;
  border: 1px solid #262626;
  border-width: 0 1px 1px;
}

.tools .strip {
  padding: 4px 0 0 4px;
}

.tools .grip {
  margin: 4px auto 9px 9px;
}

.tool-group {
  border-bottom: 1px solid #333;
  margin: 0 4px 1px;
}

.tool {
  position: relative;
  display: flex;
  align-items: center;
  justify-content: center;
  width: 28px;
  height: 24px;
  margin: 0 auto;
}

.tool svg {
  width: 20px;
  height: 20px;
}

.tool b {
  font: 20px/20px "Liberation Serif", serif;
  color: #ccc;
}

.tool.active {
  background: #303030;
  border: 1px solid #222;
}

.more {
  position: absolute;
  right: 1px;
  bottom: 1px;
  border: 2px solid #ddd;
  border-top-color: transparent;
  border-left-color: transparent;
}

.fill-top {
  display: flex;
  justify-content: space-between;
  padding: 3px 4px 5px;
}

.fill-stroke {
  position: relative;
  height: 30px;
  margin: 0 4px 7px;
}

.f-fill, .f-stroke {
  position: absolute;
  width: 20px;
  height: 20px;
  border: 1px solid #222;
  background: #fff;
}

.f-fill {
  left: 0;
  top: 0;
}

.f-stroke {
  right: 0;
  bottom: 0;
  background: linear-gradient(to top left, transparent 46%, #e8132a 46% 54%, transparent 54%), linear-gradient(#555, #555) center / 8px 8px no-repeat, #fff;
}

.fill-kind {
  display: flex;
  gap: 1px;
  width: 28px;
  height: 10px;
  margin: 0 auto 2px;
  border: 1px solid #222;
  background: #222;
}

.fill-kind i {
  flex: 1;
  background: #fff;
}

.fill-kind .g {
  background: linear-gradient(90deg, #fff, #333);
}

.fill-kind .n {
  background: linear-gradient(to top left, transparent 40%, #e8132a 40% 60%, transparent 60%), #fff;
}

/* document window */
.document {
  flex: 1;
  min-width: 0;
  display: flex;
  flex-direction: column;
}

.titlebar {
  position: relative;
  flex: none;
  height: 22px;
  display: flex;
  align-items: center;
  justify-content: center;
  gap: 4px;
  padding-right: 6px;
  background: linear-gradient(#ececec, #d4d4d4);
  border-bottom: 1px solid #aaa;
  border-radius: 4px 4px 0 0;
  color: #444;
}

.titlebar h1 {
  margin: 0;
  font: 13px/20px Inter, sans-serif;
}

.doc-ai {
  font: bold 8px "Open Sans", sans-serif;
  fill: #efcc85;
}

.lights {
  position: absolute;
  left: 6px;
  top: 6px;
  display: flex;
  gap: 10px;
}

.lights i {
  width: 12px;
  height: 12px;
  border-radius: 50%;
}

.close { background: radial-gradient(circle, #4a0505 2px, #fc5b57 3px); }
.mini { background: #fdbc40; }
.full { background: #0acb4c; }

.view {
  flex: 1;
  min-height: 0;
  display: flex;
}

.canvas {
  flex: 1;
  display: grid;
  place-items: center;
  padding: 0 4px 22px 0;
  background: #5d5d5d;
  box-shadow: inset 1px 0 #525252;
}

.artboard {
  width: 69.2%;
  aspect-ratio: 843 / 530;
  background: #3b59ff;
  border: 1px solid #000;
}

.vscroll {
  flex: none;
  width: 16px;
  display: flex;
  flex-direction: column;
  align-items: center;
  justify-content: space-between;
  padding: 6px 0 6px;
  background: #333;
  border-left: 1px solid #222;
}

.thumb {
  width: 15px;
  height: 15px;
  background: #909090;
}

.up, .down, .left, .right {
  border: 4px solid transparent;
}

.up { border-bottom: 6px solid #ddd; border-top: 0; }
.down { border-top: 6px solid #ddd; border-bottom: 0; }
.left { border-right: 6px solid #ddd; border-left: 0; }
.right { border-left: 6px solid #ddd; border-right: 0; }

.statusbar {
  flex: none;
  height: 16px;
  display: flex;
  align-items: stretch;
  padding-left: 4px;
  background: #494949;
  border-top: 1px solid #222;
}

.statusbar .combo {
  height: auto;
  border-width: 0 1px;
}

.zoomf {
  width: 58px;
}

.pager {
  margin: 3px 8px 0;
}

.mode {
  flex: 0 0 200px;
  border-left: 1px solid #333;
  text-align: center;
  font-weight: 600;
}

.mode-next {
  width: 19px;
  display: flex;
  align-items: center;
  justify-content: center;
  border-left: 1px solid #333;
}

.hscroll {
  flex: 1;
  display: flex;
  align-items: center;
  justify-content: space-between;
  padding: 0 6px 0 4px;
  background: #333;
  border-left: 1px solid #222;
}

.corner {
  width: 16px;
  background: radial-gradient(#aaa 40%, transparent 45%) 0 0 / 2px 2px;
  clip-path: polygon(80% 20%, 80% 80%, 20% 80%);
}

/* docks */
.docks {
  flex: none;
  width: 322px;
  display: flex;
  flex-direction: column;
}

.docks .strip {
  display: flex;
  align-items: center;
}

.c1 { margin-left: 27px; }
.c2 { margin-left: 33px; }
.c3 { margin-left: auto; margin-right: 5px; }

.dock-row {
  flex: 1;
  min-height: 0;
  display: flex;
}

.icon-docks {
  flex: none;
  width: 80px;
  display: flex;
  gap: 1px;
  align-items: flex-start;
  background:
    linear-gradient(#404040, #404040) 0 100% / 64px 15px no-repeat,
    linear-gradient(90deg, #8c8c8c 0, #bdbdbd 40px, #bdbdbd 48px, #3c3c3c 48px, #434343 64px, #222 64px, #222 65px, #4c4c4c 65px, #505050 66px);
}

.dock {
  width: 39px;
  background: #494949;
  border: 1px solid #262626;
  border-top: 0;
  box-shadow: 0 2px 4px #0004;
}

.set {
  padding: 4px 0 5px;
  box-shadow: inset 0 1px #5c5c5c;
}

.set + .set {
  border-top: 1px solid #262626;
}

.set button {
  display: flex;
  align-items: center;
  justify-content: center;
  width: 38px;
  height: 28px;
}

.set svg {
  width: 20px;
  height: 20px;
}

.set .flat {
  width: 18px;
  height: 18px;
}

.set .glyph {
  font: italic 22px/24px "Liberation Serif", serif;
  color: #bbb;
}

.panels {
  flex: 1;
  display: flex;
  flex-direction: column;
  gap: 1px;
  background: #2a2a2a;
  border-left: 1px solid #222;
}

.panel {
  border: 1px solid #2a2a2a;
  border-width: 1px 1px 1px 0;
  background: #494949;
}

.panel:first-child {
  border-top: 0;
}

.panel.grow {
  flex: 1;
  display: flex;
  flex-direction: column;
}

.tabs {
  flex: none;
  display: flex;
  height: 18px;
  background: linear-gradient(#353535, #2c2c2c);
}

.tabs button {
  display: flex;
  align-items: center;
  gap: 3px;
  padding: 0 6px 2px;
  border-right: 1px solid #222;
  background: #3a3a3a;
  color: #999;
  font-weight: 600;
  white-space: nowrap;
}

.tight button {
  padding: 0 5px 2px 6px;
  gap: 2px;
}

.tabs button.on {
  background: #494949;
  color: #e6e6e6;
}

.tabs svg {
  width: 16px;
  height: 10px;
  margin: 4px 3px 0 auto;
}

.updown {
  width: 5px;
  height: 9px;
  background: #ccc;
  clip-path: polygon(50% 0, 100% 40%, 0 40%, 0 60%, 100% 60%, 50% 100%, 0 60%, 0 40%);
}

.guide-top {
  display: flex;
  gap: 6px;
  padding: 7px 6px 0 5px;
}

.base {
  width: 21px;
  height: 21px;
  border: 1px solid #000;
  background: #fff;
  box-shadow: inset 0 0 0 2px #fff, inset 0 0 0 3px #000;
}

.harmony {
  flex: 1;
  display: flex;
  height: 22px;
  border: 1px solid #2a2a2a;
  background: #e2e2e2;
}

#harmony {
  display: flex;
  margin: 1px auto 1px 2px;
  border: 1px solid #000;
}

#harmony i {
  width: 16px;
}

#harmony i:first-child {
  border: 1px solid #000;
  outline: 1px solid #fff;
  outline-offset: -1px;
}

.guide-names {
  display: flex;
  align-items: center;
  justify-content: space-between;
  height: 25px;
  padding: 0 32px 0 29px;
  font-weight: 600;
}

.guide-names .tri {
  margin-right: 10px;
}

.guide {
  display: grid;
  grid-template-columns: 25px repeat(8, 1fr);
  grid-auto-rows: 14px;
  gap: 1px;
  margin: 0 5px;
  padding: 1px;
  background: #000;
}

.foot {
  display: flex;
  align-items: center;
  gap: 13px;
  height: 20px;
  padding: 0 5px;
}

.foot .resize {
  margin-right: -3px;
}

.guide-foot {
  padding-left: 10px;
}

.none-label {
  margin-left: -4px;
  font-weight: 600;
}

.push {
  margin-left: auto;
}

.dim {
  opacity: 0.35;
}

.resize {
  align-self: flex-end;
  width: 10px;
  height: 10px;
  background: radial-gradient(#999 35%, transparent 40%) 0 0 / 2px 2px;
  clip-path: polygon(100% 0, 100% 100%, 0 100%);
}

.swatch-box {
  display: flex;
  height: 136px;
  margin: 5px 5px 0;
  border: 1px solid #2a2a2a;
}

#swatches {
  flex: 1;
}

.sw-row {
  display: flex;
  gap: 1px;
  width: max-content;
  border-bottom: 1px solid #666;
  background: #666;
}

.sw-row i, .sw-row svg {
  width: 13px;
  height: 13px;
}

.sw-row svg {
  background: #494949;
}

.sw-group {
  margin-top: 2px;
}

.sw-row:first-child i:nth-child(1) {
  background: linear-gradient(to top left, transparent 44%, #e8132a 44% 56%, transparent 56%), #fff;
}

.sw-row:first-child i:nth-child(2) {
  background:
    linear-gradient(#222, #222) center / 1px 13px no-repeat,
    linear-gradient(#222, #222) center / 13px 1px no-repeat,
    radial-gradient(circle, #222 1px, #fff 2px, #fff 3px, #222 4px, #222 5px, #fff 6px);
}

.sw-row:first-child i:nth-child(3) {
  border: 1px solid #fff;
  outline: 1px solid #000;
  outline-offset: -2px;
}

.sw-row:nth-child(3) i:nth-child(13) { background: linear-gradient(90deg, #fff, #222); }
.sw-row:nth-child(3) i:nth-child(14) { background: linear-gradient(90deg, #f8e850, #f05a30); }
.sw-row:nth-child(3) i:nth-child(15) { background: linear-gradient(90deg, #2a7fc0, #d8e8f2); }
.sw-row:nth-child(4) i:nth-child(1) { background: radial-gradient(circle, #fff 4px, #231f20 6px); }
.sw-row:nth-child(4) i:nth-child(2) { background: radial-gradient(circle, #e8c848 2px, #5ab848 4px, #fff 8px); }
.sw-row:nth-child(4) i:nth-child(3) { background: repeating-conic-gradient(#8a6a58 0 25%, #c4a898 0 50%) 0 0 / 5px 5px; }

.mini-scroll {
  width: 13px;
  display: flex;
  flex-direction: column;
  align-items: center;
  justify-content: space-between;
  padding: 4px 0;
  background: #383838;
}

.mini-scroll .up { border-bottom-color: #777; }
.mini-scroll .down { border-top-color: #777; }

.swatch-foot {
  gap: 14px;
  height: 19px;
}

.char {
  display: grid;
  grid-template-columns: 22px 84px 1fr 84px;
  align-items: center;
  row-gap: 7px;
  padding: 6px 6px 5px 5px;
}

.char .wide, .char hr {
  grid-column: 1 / -1;
}

.char hr {
  width: 100%;
  margin: -1px 0 0;
  border: 0;
  border-top: 1px solid #333;
}

.char label {
  display: flex;
  align-items: center;
  justify-content: center;
  justify-self: end;
  width: 18px;
  height: 19px;
  margin-right: 4px;
  color: #ccc;
}

.char .serif {
  align-items: baseline;
  font: 18px/18px "Liberation Serif", serif;
}

.char .serif small {
  font-size: 12px;
  color: #999;
}

.char .kern {
  font-size: 12px;
}

.char .track {
  flex-direction: column;
}

.track span {
  width: 18px;
  background: #aaa;
  color: #333;
  font: 12px/12px "Open Sans", sans-serif;
  text-align: center;
}

.styles {
  flex: 1;
  margin: 6px 5px 0;
  border: 1px solid #2a2a2a;
}

.styles li {
  height: 21px;
  padding-left: 5px;
  background: #5c6574;
  border-bottom: 1px solid #2a2a2a;
  line-height: 20px;
}

.layers {
  position: relative;
  height: 153px;
  margin: 5px 5px 0;
  border: 1px solid #2a2a2a;
}

.layers::after {
  content: "";
  position: absolute;
  right: 0;
  top: 42px;
  border: 3px solid #ddd;
  border-left-color: transparent;
  border-bottom-color: transparent;
}

.layers li {
  display: grid;
  grid-template-columns: 20px 21px 6px 22px 18px 1fr 35px;
  align-items: center;
  height: 21px;
  border-bottom: 1px solid #2a2a2a;
}

.layers svg.eye {
  width: 14px;
  justify-self: center;
}

.lock {
  height: 20px;
  border: 1px solid #2a2a2a;
  border-width: 0 1px;
}

.tag {
  height: 18px;
  margin: 0 1px;
}

.red { background: #ff4a52; }
.blue { background: #5080ff; }
.green { background: #40ff62; }
.violet { background: #5848ff; }

.layers .right {
  margin-left: 6px;
  justify-self: start;
}

.thumbnail {
  width: 18px;
  height: 18px;
  border: 1px solid #000;
}

.layers span {
  padding-left: 5px;
}

.target {
  height: 20px;
  border-left: 1px solid #2a2a2a;
  padding: 5px 0 0 5px;
}

.target::before {
  content: "";
  display: block;
  width: 9px;
  height: 9px;
  border: 1px solid #ccc;
  border-radius: 50%;
}

.layer-foot {
  height: 19px;
}

.tail {
  height: 7px;
  padding-top: 2px;
  background: #494949;
}
```
